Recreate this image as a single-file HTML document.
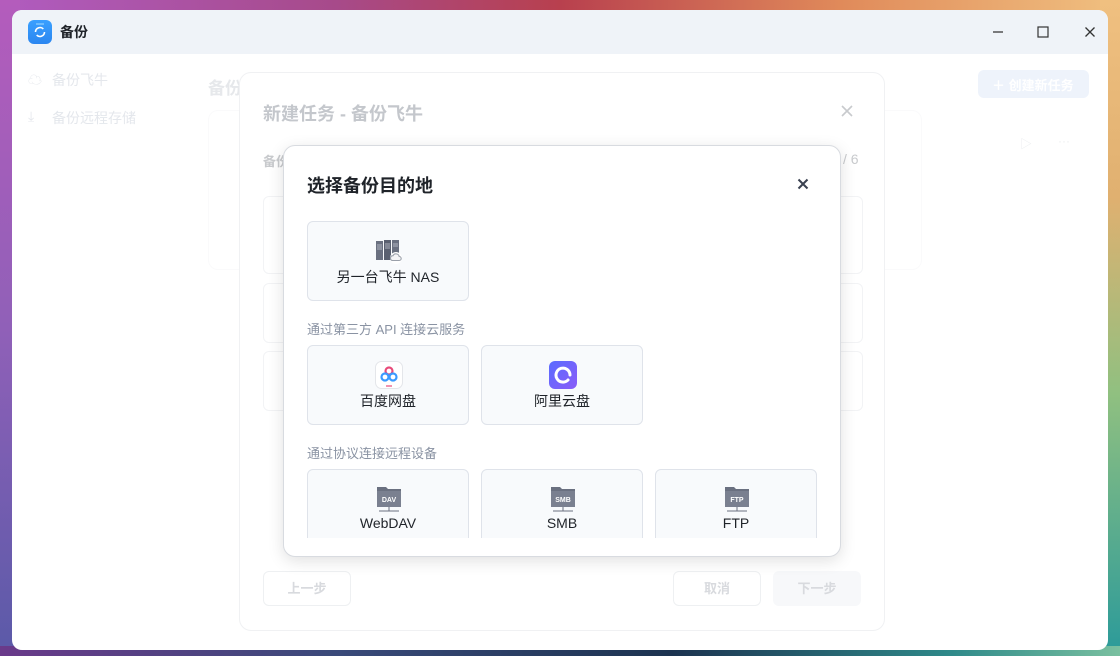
<!DOCTYPE html>
<html><head><meta charset="utf-8"><style>
*{margin:0;padding:0;box-sizing:border-box}
body{width:1120px;height:656px;overflow:hidden;position:relative;font-family:"Liberation Sans","Noto Sans CJK SC",sans-serif;
background:linear-gradient(90deg,#b05cc0 0%,#a74a8a 30%,#b8404e 50%,#e08a5a 75%,#f0c080 100%)}
.bgb{position:absolute;left:0;right:0;bottom:0;height:10px;background:linear-gradient(90deg,#6a3a8a,#3a4a7a 30%,#1c3350 60%,#2f8a8a 85%,#7ac0a0)}
.bgl{position:absolute;left:0;top:0;width:20px;bottom:0;background:linear-gradient(180deg,#b45cbc,#9060b8 50%,#5a5aa8)}
.bgr{position:absolute;right:0;top:0;width:20px;bottom:0;background:linear-gradient(180deg,#f0c080,#e0b070 30%,#90c080 60%,#2a9a9a)}
.win{position:absolute;left:12px;top:10px;width:1096px;height:640px;background:#fff;border-radius:10px;overflow:hidden}
.tb{height:44px;background:#eff3f8;position:relative}
.appi{position:absolute;left:16px;top:10px;width:24px;height:24px;border-radius:6px;background:linear-gradient(180deg,#3aa0ff,#2b86f0)}
.tt{position:absolute;left:48px;top:12px;font-size:14px;font-weight:bold;color:#1f2329}
.t{position:absolute;white-space:nowrap}
.fade{color:#e4e7ec}
.dlg{position:absolute;left:239px;top:72px;width:646px;height:559px;border:1px solid #f0f1f3;border-radius:12px;background:#fff}
.btn{position:absolute;height:35px;border:1px solid #eef0f2;border-radius:6px;font-size:13px;font-weight:bold;color:#d8dade;text-align:center;line-height:33px}
.in{position:absolute;left:283px;top:145px;width:558px;height:412px;background:#fff;border:1px solid #d8dbe0;border-radius:12px;box-shadow:0 4px 16px rgba(0,0,0,.12);overflow:hidden}
.card{position:absolute;width:162px;height:80px;border:1px solid #dfe3ea;border-radius:6px;background:#f8fafc}
.card .lb{position:absolute;left:0;right:0;top:45px;text-align:center;font-size:14px;color:#1f2329}
.card svg{position:absolute;left:67px;top:15px}
.sec{position:absolute;left:23px;font-size:13px;color:#8a93a3}
</style></head><body>
<div class="bgl"></div><div class="bgr"></div><div class="bgb"></div>
<div class="win">
 <div class="tb">
  <div class="appi"><svg width="24" height="24" viewBox="0 0 24 24"><path d="M8 4h8" stroke="#8fd0ff" stroke-width="1.2"/><path d="M7.5 12a4.5 4.5 0 0 1 7.8-3M16.5 12a4.5 4.5 0 0 1-7.8 3" stroke="#fff" stroke-width="1.6" fill="none"/></svg></div>
  <div class="tt">备份</div>
  <svg style="position:absolute;left:980px;top:16px" width="12" height="12"><path d="M1 6h10" stroke="#333" stroke-width="1.2"/></svg>
  <svg style="position:absolute;left:1025px;top:16px" width="12" height="12"><rect x="1" y="1" width="10" height="10" fill="none" stroke="#333" stroke-width="1.2"/></svg>
  <svg style="position:absolute;left:1072px;top:16px" width="12" height="12"><path d="M1.5 1.5l9 9M10.5 1.5l-9 9" stroke="#333" stroke-width="1.3"/></svg>
 </div>
 <div class="t fade" style="left:40px;top:60px;font-size:14px">备份飞牛</div>
 <div class="t fade" style="left:40px;top:98px;font-size:14px">备份远程存储</div>
 <div class="t fade" style="left:16px;top:60px;font-size:14px">☁</div>
 <div class="t fade" style="left:16px;top:98px;font-size:14px">⤓</div>
 <div class="t" style="left:196px;top:64px;font-size:17px;font-weight:bold;color:#e6e8eb">备份</div>
 <div style="position:absolute;left:966px;top:60px;width:111px;height:28px;border-radius:6px;background:#eef3fb"></div>
 <div class="t" style="left:980px;top:65px;font-size:13px;font-weight:bold;color:#fff">＋ 创建新任务</div>
 <div class="t" style="left:1008px;top:125px;font-size:12px;color:#eceef0">▷</div>
 <div class="t" style="left:1046px;top:124px;font-size:12px;color:#eceef0">···</div>
 <div style="position:absolute;left:196px;top:100px;width:714px;height:160px;border:1px solid #fafafb;border-radius:10px"></div>
</div>
<div class="dlg">
 <div class="t" style="left:23px;top:27px;font-size:18px;font-weight:bold;color:#c4c7cc">新建任务 - 备份飞牛</div>
 <svg style="position:absolute;left:601px;top:32px" width="12" height="12"><path d="M1 1l10 10M11 1L1 11" stroke="#c8cacd" stroke-width="1.6"/></svg>
 <div class="t" style="left:23px;top:78px;font-size:13px;font-weight:bold;color:#c8cacd">备份</div>
 <div class="t" style="left:603px;top:78px;font-size:14px;color:#c8cacd">/ 6</div>
 <div style="position:absolute;left:23px;top:123px;width:600px;height:78px;border:1px solid #f2f3f5;border-radius:6px"></div>
 <div style="position:absolute;left:23px;top:210px;width:600px;height:60px;border:1px solid #f2f3f5;border-radius:6px"></div>
 <div style="position:absolute;left:23px;top:278px;width:600px;height:60px;border:1px solid #f2f3f5;border-radius:6px"></div>
 <div class="btn" style="left:23px;top:498px;width:88px">上一步</div>
 <div class="btn" style="left:433px;top:498px;width:88px">取消</div>
 <div class="btn" style="left:533px;top:498px;width:88px;background:#f7f8fa;border-color:#f7f8fa">下一步</div>
</div>
<div class="in">
 <div class="t" style="left:23px;top:26px;font-size:18px;font-weight:bold;color:#1f2329">选择备份目的地</div>
 <svg style="position:absolute;left:513px;top:32px" width="12" height="12"><path d="M1.5 1.5l9 9M10.5 1.5l-9 9" stroke="#3a4150" stroke-width="2"/></svg>
 <div class="card" style="left:23px;top:75px"><svg width="28" height="28" viewBox="0 0 28 28"><rect x="1" y="4" width="7" height="19" fill="#6a7080"/><rect x="9" y="3" width="7" height="20" fill="#5a6070"/><rect x="17" y="3" width="7" height="20" fill="#6a7080"/><path d="M2 8h5M2 10h5M2 12h5M10 7h5M10 9h5M10 11h5M18 7h5M18 9h5" stroke="#c8ccd4" stroke-width=".8"/><circle cx="21" cy="21" r="6" fill="#fff"/><path d="M17 23.5a2.5 2.5 0 0 1 1-4.8a3.3 3.3 0 0 1 6.2 .8a2 2 0 0 1 0 4z" fill="#f4f4f6" stroke="#9aa0aa" stroke-width="1.1"/></svg><div class="lb">另一台飞牛 NAS</div></div>
 <div class="sec" style="top:173px">通过第三方 API 连接云服务</div>
 <div class="card" style="left:23px;top:199px"><svg width="28" height="28" viewBox="0 0 28 28"><rect x=".5" y=".5" width="27" height="27" rx="6" fill="#fff" stroke="#e4e6ea"/><circle cx="14" cy="10" r="3.5" fill="none" stroke="#e84a7a" stroke-width="2.2"/><circle cx="10" cy="16" r="3.5" fill="none" stroke="#3a9aff" stroke-width="2.2"/><circle cx="18" cy="16" r="3.5" fill="none" stroke="#3a9aff" stroke-width="2.2"/><path d="M11 25h6" stroke="#e84a7a" stroke-width="1.2"/></svg><div class="lb">百度网盘</div></div>
 <div class="card" style="left:197px;top:199px"><svg width="28" height="28" viewBox="0 0 28 28"><defs><linearGradient id="g" x1="0" y1="0" x2="1" y2="1"><stop offset="0" stop-color="#5a6cff"/><stop offset="1" stop-color="#8a5cf8"/></linearGradient></defs><rect width="28" height="28" rx="6" fill="url(#g)"/><path d="M19 19a7 7 0 1 1 2-5" fill="none" stroke="#fff" stroke-width="3" stroke-linecap="round"/></svg><div class="lb">阿里云盘</div></div>
 <div class="sec" style="top:297px">通过协议连接远程设备</div>
 <div style="position:absolute;left:0;top:323px;width:558px;height:69px;overflow:hidden">
  <div class="card" style="left:23px;top:0"><svg width="28" height="28" viewBox="0 0 28 28"><path d="M2 2h9l2 2h13v18H2z" fill="#6a7080"/><rect x="2" y="6" width="24" height="16" fill="#7a8090"/><text x="14" y="17" font-size="7" fill="#fff" text-anchor="middle" font-family="Liberation Sans" font-weight="bold">DAV</text><path d="M14 22v4M4 26h20" stroke="#6a7080"/></svg><div class="lb">WebDAV</div></div>
  <div class="card" style="left:197px;top:0"><svg width="28" height="28" viewBox="0 0 28 28"><path d="M2 2h9l2 2h13v18H2z" fill="#6a7080"/><rect x="2" y="6" width="24" height="16" fill="#7a8090"/><text x="14" y="17" font-size="7" fill="#fff" text-anchor="middle" font-family="Liberation Sans" font-weight="bold">SMB</text><path d="M14 22v4M4 26h20" stroke="#6a7080"/></svg><div class="lb">SMB</div></div>
  <div class="card" style="left:371px;top:0"><svg width="28" height="28" viewBox="0 0 28 28"><path d="M2 2h9l2 2h13v18H2z" fill="#6a7080"/><rect x="2" y="6" width="24" height="16" fill="#7a8090"/><text x="14" y="17" font-size="7" fill="#fff" text-anchor="middle" font-family="Liberation Sans" font-weight="bold">FTP</text><path d="M14 22v4M4 26h20" stroke="#6a7080"/></svg><div class="lb">FTP</div></div>
 </div>
</div>
</body></html>
